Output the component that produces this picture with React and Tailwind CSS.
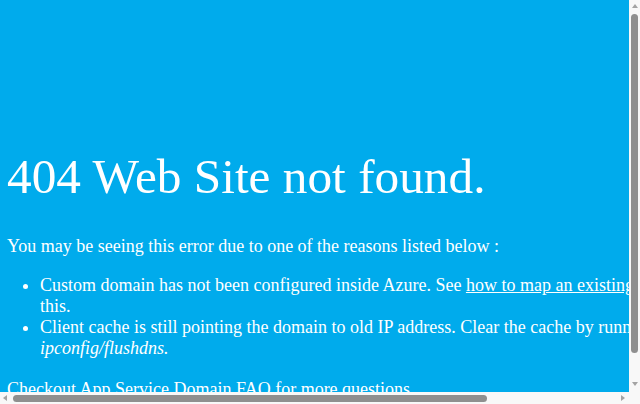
function Tri({ dir }) {
  const pts = {
    up: '0,4 3,0 6,4',
    down: '0,0 6,0 3,4',
    left: '4,0 4,6 0,3',
    right: '0,0 0,6 4,3',
  }[dir];
  const w = dir === 'up' || dir === 'down' ? 6 : 4;
  const h = dir === 'up' || dir === 'down' ? 4 : 6;
  return (
    <svg width={w} height={h} viewBox={`0 0 ${w} ${h}`} className="block shrink-0">
      <polygon points={pts} fill="#a3a3a3" />
    </svg>
  );
}

export default function App() {
  return (
    <div className="w-[640px] h-[404px] flex flex-col overflow-hidden bg-[#f8f8f8]">
      <div className="flex flex-1 min-h-0">
        <div className="flex-1 min-w-0 overflow-hidden bg-[#00abec]">
          <div
            className="w-[798px] text-white pl-[7px] pr-2 pt-[149px]"
            style={{ fontFamily: '"Liberation Serif", "Times New Roman", serif' }}
          >
            <h1 className="text-[49.3px] font-normal leading-[56px] m-0 mb-[31px]">
              404 Web Site not found.
            </h1>
            <p className="text-[18px] leading-[21px] m-0">
              You may be seeing this error due to one of the reasons listed below :
            </p>
            <ul className="list-disc pl-[33px] text-[18px] leading-[21px] mt-[18px] mb-[20px]">
              <li>
                Custom domain has not been configured inside Azure. See{' '}
                <a className="underline text-white" href="#">how to map an existing domain</a>{' '}
                to resolve this.
              </li>
              <li>
                Client cache is still pointing the domain to old IP address. Clear the cache by
                running the command <i>ipconfig/flushdns.</i>
              </li>
            </ul>
            <p className="text-[18px] leading-[21px] m-0 pb-[18px]">
              Checkout <a className="underline text-white" href="#">App Service Domain FAQ</a> for more questions.
            </p>
          </div>
        </div>
        <div className="w-[11px] shrink-0 flex flex-col items-center pt-[4px] pb-[6px]">
          <Tri dir="up" />
          <div className="mt-[6px] h-[339px] w-[7px] rounded-full bg-[#8f8f8f]" />
          <div className="flex-1" />
          <Tri dir="down" />
        </div>
      </div>
      <div className="h-[12px] shrink-0 flex items-center">
        <div className="flex-1 flex items-center pl-[3px] pr-[4px]">
          <Tri dir="left" />
          <div className="ml-[6px] h-[7px] w-[474px] rounded-full bg-[#8f8f8f]" />
          <div className="flex-1" />
          <Tri dir="right" />
        </div>
        <div className="w-[11px] shrink-0" />
      </div>
    </div>
  );
}
